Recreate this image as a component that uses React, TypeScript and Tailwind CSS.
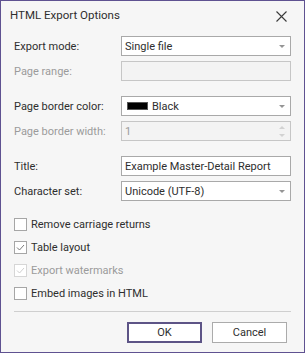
import React from "react";

function Arrow() {
  return (
    <svg width="6" height="3" viewBox="0 0 6 3" className="shrink-0">
      <path d="M0 0 L6 0 L3 3 Z" fill="#959595" />
    </svg>
  );
}

function Row({
  label,
  disabled,
  children,
  className = "",
}: {
  label: string;
  disabled?: boolean;
  children: React.ReactNode;
  className?: string;
}) {
  return (
    <div className={"flex items-center h-[20px] " + className}>
      <span className={"w-[107px] shrink-0 whitespace-nowrap " + (disabled ? "text-[#9b9b9b]" : "text-[#2e2e2e]")}>
        {label}
      </span>
      {children}
    </div>
  );
}

function Combo({ children }: { children: React.ReactNode }) {
  return (
    <div className="flex-1 h-[20px] bg-white border border-[#a9a9a9] flex items-center pl-[3px] pr-[5px]">
      <div className="flex-1 flex items-center text-[#2e2e2e]">{children}</div>
      <Arrow />
    </div>
  );
}

function Check({
  label,
  checked,
  disabled,
}: {
  label: string;
  checked?: boolean;
  disabled?: boolean;
}) {
  return (
    <div className="flex items-center h-[23px]">
      <div
        className={
          "w-[13px] h-[13px] border bg-white flex items-center justify-center " +
          (disabled ? "border-[#d6d6d6]" : "border-[#a6a6a6]")
        }
      >
        {checked && (
          <svg width="9" height="7" viewBox="0 0 9 7">
            <path
              d="M1 3.5 L3.5 6 L8 1"
              fill="none"
              stroke={disabled ? "#cfcfcf" : "#7a7a7a"}
              strokeWidth="1"
            />
          </svg>
        )}
      </div>
      <span className={"ml-[4px] whitespace-nowrap " + (disabled ? "text-[#9b9b9b]" : "text-[#2e2e2e]")}>{label}</span>
    </div>
  );
}

export default function App() {
  return (
    <div className="w-[305px] h-[353px] bg-[#f6f6f6] border border-[#5f5291] font-['Roboto','Noto_Sans',sans-serif] text-[11px] leading-none flex flex-col">
      <div className="h-[30px] flex items-center justify-between pl-[9px] pr-[17px] text-[#2e2e2e]">
        <span className="text-[11.5px]">HTML Export Options</span>
        <svg width="11" height="11" viewBox="0 0 11 11">
          <path d="M0.5 0.5 L10.5 10.5 M10.5 0.5 L0.5 10.5" stroke="#3a3a3a" strokeWidth="1.1" />
        </svg>
      </div>
      <div className="px-[13px] pt-[5px] flex flex-col">
        <Row label="Export mode:">
          <Combo>Single file</Combo>
        </Row>
        <Row label="Page range:" disabled className="mt-[5px]">
          <div className="flex-1 h-[20px] bg-[#f3f3f3] border border-[#c6c6c6]" />
        </Row>
        <Row label="Page border color:" className="mt-[15px]">
          <Combo>
            <span className="ml-[2px] w-[21px] h-[8px] bg-black border border-[#555] inline-block" />
            <span className="ml-[4px]">Black</span>
          </Combo>
        </Row>
        <Row label="Page border width:" disabled className="mt-[5px]">
          <div className="flex-1 h-[20px] bg-[#f3f3f3] border border-[#c6c6c6] flex items-center pl-[3px] pr-[5px] text-[#9b9b9b]">
            <span className="flex-1">1</span>
            <div className="flex flex-col gap-[5px]">
              <svg width="6" height="3" viewBox="0 0 6 3">
                <path d="M0 3 L6 3 L3 0 Z" fill="#d2d2d2" />
              </svg>
              <svg width="6" height="3" viewBox="0 0 6 3">
                <path d="M0 0 L6 0 L3 3 Z" fill="#d2d2d2" />
              </svg>
            </div>
          </div>
        </Row>
        <Row label="Title:" className="mt-[15px]">
          <div className="flex-1 h-[20px] bg-white border border-[#a9a9a9] flex items-center pl-[3px] text-[#2e2e2e] whitespace-nowrap">
            Example Master-Detail Report
          </div>
        </Row>
        <Row label="Character set:" className="mt-[5px]">
          <Combo>Unicode (UTF-8)</Combo>
        </Row>
        <div className="mt-[12px] flex flex-col">
          <Check label="Remove carriage returns" />
          <Check label="Table layout" checked />
          <Check label="Export watermarks" checked disabled />
          <Check label="Embed images in HTML" />
        </div>
        <div className="mt-[6px] h-px bg-[#cfcfcf]" />
        <div className="mt-[10px] flex justify-end pr-[4px] gap-[10px]">
          <button className="w-[75px] h-[21px] bg-white border-2 border-[#5d5486] text-[#2e2e2e]">OK</button>
          <button className="w-[75px] h-[21px] bg-white border border-[#ababab] text-[#2e2e2e]">Cancel</button>
        </div>
      </div>
    </div>
  );
}
